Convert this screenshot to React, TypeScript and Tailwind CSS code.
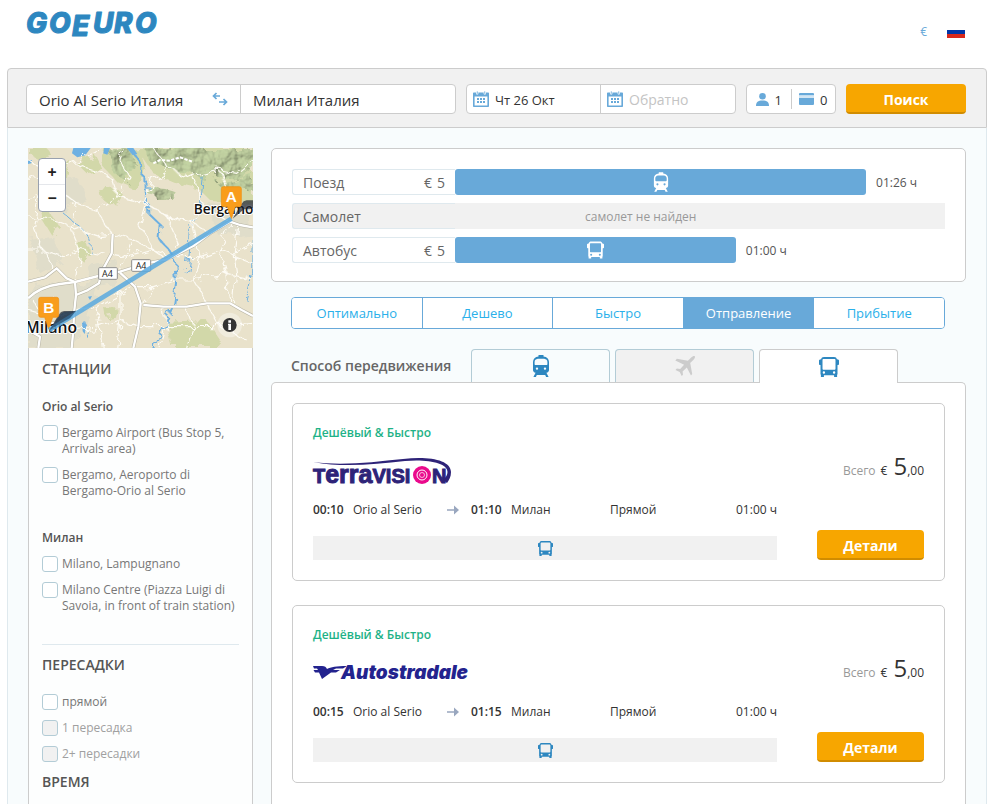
import { useState } from 'react'
import { clsx } from 'clsx'

interface IconProps {
  className?: string
}

interface CompareRow {
  label: string
  price?: number
  // bar length in percent of the track
  share?: number
  duration?: string
  icon?: 'train' | 'bus'
  empty?: string
}

interface Trip {
  id: string
  carrier: 'terravision' | 'autostradale'
  depart: string
  arrive: string
}

interface StationGroup {
  city: string
  stations: string[]
}

const compareRows: CompareRow[] = [
  { label: 'Поезд', price: 5, share: 83.9, duration: '01:26 ч', icon: 'train' },
  { label: 'Самолет', empty: 'самолет не найден' },
  { label: 'Автобус', price: 5, share: 57.3, duration: '01:00 ч', icon: 'bus' },
]

const sortOptions = ['Оптимально', 'Дешево', 'Быстро', 'Отправление', 'Прибытие']

const stationGroups: StationGroup[] = [
  {
    city: 'Orio al Serio',
    stations: ['Bergamo Airport (Bus Stop 5, Arrivals area)', 'Bergamo, Aeroporto di Bergamo-Orio al Serio'],
  },
  {
    city: 'Милан',
    stations: ['Milano, Lampugnano', 'Milano Centre (Piazza Luigi di Savoia, in front of train station)'],
  },
]

const trips: Trip[] = [
  { id: 't1', carrier: 'terravision', depart: '00:10', arrive: '01:10' },
  { id: 't2', carrier: 'autostradale', depart: '00:15', arrive: '01:15' },
]

function BusIcon({ className }: IconProps) {
  return (
    <svg className={className} viewBox="0 0 20 20" fill="currentColor" aria-hidden="true">
      <path
        fillRule="evenodd"
        d="M5 0h10c1.700 0 2.600.8 2.800 2.200l1.300.3c.6.2.9.5.9 1.100v3.600c0 .5-.4.8-.9.8h-.6v9.600h-.4V20h-3v-1.800H4.900V20h-3v-2.400h-.4V8H.9C.4 8 0 7.700 0 7.200V3.600c0-.6.3-.9.9-1.100l1.300-.3C2.400.8 3.300 0 5 0zM4.600 2C3.800 2 3.500 2.500 3.500 3.200v8.200c0 .8.3 1.300 1.100 1.300h10.800c.8 0 1.100-.5 1.100-1.300V3.200c0-.7-.3-1.200-1.100-1.200zM4.900 14.300a1.200 1.200 0 100 2.400 1.200 1.200 0 000-2.400zm10.200 0a1.200 1.200 0 100 2.400 1.200 1.200 0 000-2.400z"
      />
    </svg>
  )
}

function TrainIcon({ className }: IconProps) {
  return (
    <svg className={className} viewBox="0 0 18 22" fill="currentColor" aria-hidden="true">
      <path
        fillRule="evenodd"
        d="M6.500 0h5v1.400c3.400.4 5.500 2.400 5.500 5.600v8c0 1.500-1 2.500-2.600 2.800L16.600 22h-2.500l-.9-2H4.800l-.9 2H1.400l2.200-4.200C2 17.500 1 16.500 1 15V7c0-3.200 2.100-5.200 5.500-5.600zM5.800 3.700C3.700 4 2.600 5.200 2.600 7v2c0 .7.300 1.100 1 1.100h10.800c.7 0 1-.4 1-1.100V7c0-1.800-1.100-3-3.200-3.300zM5 12.400a1.200 1.200 0 100 2.400 1.200 1.200 0 000-2.400zm8 0a1.200 1.200 0 100 2.400 1.200 1.200 0 000-2.400z"
      />
    </svg>
  )
}

function PlaneIcon({ className }: IconProps) {
  return (
    <svg className={className} viewBox="0 0 20 20" fill="currentColor" aria-hidden="true">
      <path d="M19.800.2c.5 1-.3 2.500-1.500 3.700l-3.100 3.100 2 11-1.200 1.600-4.200-8.200-4.200 4 .4 3.300-1.300 1.300-2-4-4.200-2 1.300-1.400 3.400.5 3.900-4.300L.3 4.600 1.900 2.700l11 2 3.300-3.200C17.300.6 18.800-.3 19.800.2z" />
    </svg>
  )
}

function CalendarIcon({ className }: IconProps) {
  return (
    <svg className={className} viewBox="0 0 16 16" fill="#68a9d9" aria-hidden="true">
      <path fillRule="evenodd" d="M1 1.500h14c.6 0 1 .4 1 1V15c0 .6-.4 1-1 1H1c-.6 0-1-.4-1-1V2.500c0-.6.400-1 1-1zM1.600 5.500v8.900h12.800V5.500z" />
      <path d="M3.500 0h1.500v3.200H3.500zM11 0h1.500v3.200H11z" stroke="#fff" strokeWidth="0.700" />
      <path d="M4 7h2v2H4zM7 7h2v2H7zM10 7h2v2h-2zM4 10h2v2H4zM7 10h2v2H7zM10 10h2v2h-2z" />
    </svg>
  )
}

function Logo() {
  return (
    <svg className="h-[36px] w-[140px] overflow-visible" viewBox="0 0 140 36" role="img" aria-label="GoEuro">
      <g
        fill="#2d87c0"
        stroke="#2d87c0"
        strokeWidth="1"
        strokeLinejoin="round"
        fontFamily="Inter, 'Open Sans', sans-serif"
        fontWeight="800"
        fontStyle="italic"
        fontSize="28"
      >
        <text x="-1 22 45 66 87 108" y="23 23 26 23 23 23">GOEURO</text>
      </g>
    </svg>
  )
}

function TerravisionLogo() {
  return (
    <svg className="h-[28px] w-[140px] overflow-visible" viewBox="0 0 140 28" role="img" aria-label="Terravision">
      <g fill="#2e2378" stroke="#2e2378" strokeWidth="1" fontFamily="'Liberation Sans', Arial, sans-serif" fontWeight="700">
        <text x="0" y="26" fontSize="20">
          T<tspan fontSize="25">erra</tspan>VISI
        </text>
        <text x="119" y="26" fontSize="20">N</text>
      </g>
      <path d="M0 5C30 9 60 5 90 2c26-3 48 1 48 13 0 5-2 8-4 11l-4-3c3-3 4.500-5 4.500-8C134.500 6 115 2 92 4 62 7 32 11 0 5z" fill="#2e2378" />
      <circle cx="109" cy="18" r="9" fill="#ea0a8c" />
      <circle cx="109" cy="18" r="5" fill="none" stroke="#fff" strokeWidth="1" />
      <circle cx="109" cy="18" r="2.500" fill="none" stroke="#fff" strokeWidth="0.700" />
    </svg>
  )
}

function AutostradaleLogo() {
  return (
    <svg className="h-[28px] w-[160px] overflow-visible" viewBox="0 0 160 28" role="img" aria-label="Autostradale">
      <g fill="#23238e">
        <path d="M0 7h9c3 0 4 1 5 3 4-2 9-3 20-3l-4 2.500h-7L20 11h7l-4 2.500h-5L9 20l-3-6.500H2L.5 11H5L4 9.500H1z" />
        <text
          x="28"
          y="20"
          fontSize="19"
          fontWeight="900"
          fontStyle="italic"
          fontFamily="Inter, 'Liberation Sans', sans-serif"
        >
          Autostradale
        </text>
      </g>
    </svg>
  )
}

function MapPin({ letter, x, y }: { letter: string; x: number; y: number }) {
  return (
    <g transform={`translate(${x} ${y})`}>
      <path d="M4 0L30-44Q36-54 46-55H82L68-36Q62-28 52-28H38z" fill="#1d2430" opacity="0.700" />
      <path d="M-24-96H24Q30-96 30-90V-42Q30-36 24-36H12L0 0-12-36H-24Q-30-36-30-42V-90Q-30-96-24-96z" fill="#f99d1c" stroke="#ee8c0b" strokeWidth="2" />
      <text x="0" y="-50" textAnchor="middle" fontSize="46" fontWeight="700" fill="#fff" fontFamily="'Liberation Sans', Arial, sans-serif">
        {letter}
      </text>
    </g>
  )
}

const motorways = [
  'M24 475Q60 440 120 432L165 426 235 408 300 395 380 370 440 358 520 318 570 280 630 245 660 255 699 262',
  'M278 282L275 340 245 395 237 430 200 452 168 465 162 520 160 570 155 624',
  'M24 425L75 412 110 385 140 415 165 426 168 465',
  'M300 398L345 440 362 490 355 560 340 624',
  'M370 495L430 500 500 500 560 490 630 490 665 510 699 528',
  'M24 570L60 590 55 624M75 545L160 560',
]

const roads =
  'M24 60L90 90 120 150 170 190 230 210 278 285M90 90L60 170 40 260 70 330 100 390M24 120L90 90 160 70 230 40 240 24M170 190L150 260 180 330 165 426M230 210L290 170 330 110 300 60 310 24M24 230L100 240 150 260 240 290 278 285M290 170L380 190 440 230 520 250 570 280M278 285L340 300 400 330 460 350M380 190L360 260 400 330 440 358M440 230L480 320 460 350M340 300L320 350 300 395M24 330L70 330 130 350 180 330 260 345M400 330L330 350 275 340M400 24L450 90 520 110 550 200 630 245M520 110L600 90 650 100 699 60M550 200L520 250 540 350 520 420 560 490M630 245L600 330 620 400 630 490M540 350L600 330 650 350 699 370M460 350L540 350M460 420L520 420 620 400 699 420M362 490L400 440 460 420M345 440L400 440M500 500L520 560 500 624M560 490L600 560 680 600M430 500L440 560 420 624M355 560L440 560 520 560 600 560 699 550M160 520L230 500 300 460 345 440M160 570L240 560 300 540 355 560M230 500L240 560 250 624M300 460L300 540 290 624M100 470L110 520 160 520M40 480L60 520 110 520M24 510L60 520M650 255L640 330 650 400 640 490M699 310L640 330M290 170L270 110 220 90 160 70M60 170L130 160 170 190M24 180L60 170M450 90L400 120 380 190M600 90L620 150 600 200'

const hills = [
  'M270 34L330 34 355 70 345 100 320 125 285 105 265 70z',
  'M370 24H699V80L650 115 600 105 565 135 530 105 480 95 430 75 395 70z',
  'M385 145L440 150 470 160 460 178 420 175 388 168z',
  'M590 130L640 120 699 100V150L660 145 625 160z',
]

const meadows = [
  'M240 150L290 145 315 170 300 195 265 190 245 175z',
  'M180 310L200 300 205 340 190 365 175 350z',
  'M255 505H290L285 530 260 535z',
  'M60 230L90 220 120 260 90 280z',
  'M110 90L150 60 140 120 120 130z',
  'M24 24H80L100 50 60 60 24 40z',
  'M170 70L230 50 250 90 200 100z',
  'M440 545L560 540 600 600 580 624H460z',
  'M255 30L360 24 380 90 340 145 290 125 250 80z',
  'M350 24H699V180L640 185 570 180 530 140 460 125 400 100z',
]

function RouteMap() {
  return (
    <div className="relative h-[200px] overflow-hidden bg-[#e8e1ca]">
      <svg className="h-full w-full" viewBox="24 24 675 600" preserveAspectRatio="xMidYMid slice" role="img" aria-label="Bergamo – Milano">
        <defs>
          <filter id="rough" x="-10%" y="-10%" width="120%" height="120%">
            <feTurbulence type="fractalNoise" baseFrequency="0.030" numOctaves="3" seed="4" result="noise" />
            <feDisplacementMap in="SourceGraphic" in2="noise" scale="38" />
          </filter>
          <filter id="relief" x="0" y="0" width="100%" height="100%">
            <feTurbulence type="fractalNoise" baseFrequency="0.022" numOctaves="4" seed="9" result="n" />
            <feDiffuseLighting in="n" surfaceScale="14" diffuseConstant="1.150" lightingColor="#b7c79a" result="light">
              <feDistantLight azimuth="225" elevation="58" />
            </feDiffuseLighting>
            <feDisplacementMap in="SourceGraphic" in2="n" scale="60" result="shape" />
            <feComposite in="light" in2="shape" operator="in" />
          </filter>
        </defs>
        <rect x="24" y="24" width="675" height="600" fill="#e9e2cb" />
        <g fill="#e0ddca" filter="url(#rough)">
          <path d="M24 450L140 420 240 440 200 560 150 624H24zM60 130L170 110 200 180 120 210zM200 380L290 360 280 430 220 440zM560 190L690 180 699 280 600 290zM30 300L100 290 130 360 60 400z" />
        </g>
        <g fill="#d2d8a9" filter="url(#rough)">
          {meadows.map((d) => (
            <path key={d} d={d} />
          ))}
        </g>
        <g fill="#a9bd8c" filter="url(#relief)" opacity="0.900">
          {hills.map((d) => (
            <path key={d} d={d} />
          ))}
        </g>
        <g fill="none" stroke="#6db0e2" strokeLinejoin="round">
          <g filter="url(#rough)">
            <path strokeWidth="6" d="M335 34L360 70 362 100 382 120 385 220 425 258 422 300 462 352 468 430 458 500 428 570 400 634" />
            <path strokeWidth="3" d="M550 110L540 210 510 280 508 340 498 400M700 280L698 400 678 480M120 210L190 270 215 310 208 340M195 545L200 590" />
          </g>
          <path fill="#6db0e2" stroke="none" d="M160 24H212L196 46 172 52 156 40zM252 24H270L262 44 250 40zM320 24H340L352 42 338 46zM24 62L36 60 34 70 24 72zM186 548L200 552 194 582 188 574zM204 470L216 468 210 480z" />
        </g>
        <path d={roads} fill="none" stroke="#fdfbf4" strokeWidth="3.500" strokeLinejoin="round" filter="url(#rough)" />
        <path d="M400 70L420 60 450 62 480 52 520 66" fill="none" stroke="#fff" strokeWidth="6" strokeDasharray="10 4" />
        <g fill="none" strokeLinejoin="round">
          {motorways.map((d) => (
            <path key={d} d={d} stroke="#b5b2a2" strokeWidth="10" />
          ))}
          {motorways.map((d) => (
            <path key={d} d={d} stroke="#fff" strokeWidth="7" />
          ))}
        </g>
        <g fill="#fff" stroke="#8f8f8f" strokeWidth="3">
          <rect x="236" y="383" width="56" height="35" rx="3" />
          <rect x="335" y="359" width="57" height="35" rx="3" />
        </g>
        <g fontFamily="'Open Sans', sans-serif" fontSize="27" fill="#222" fontWeight="500">
          <text x="246" y="410">A4</text>
          <text x="347" y="386">A4</text>
        </g>
        <g fontFamily="'Open Sans', sans-serif" fill="#111" fontWeight="600" stroke="#fff" strokeWidth="6" paintOrder="stroke" strokeLinejoin="round">
          <text x="521" y="221" fontSize="41">Bergamo</text>
          <text x="16" y="578" fontSize="47">Milano</text>
        </g>
        <MapPin letter="A" x={634} y={236} />
        <MapPin letter="B" x={86} y={568} />
        <path d="M634 236L88 570" stroke="#5aaae0" strokeWidth="14" opacity="0.850" />
        <path d="M88 570L122 522Q130 514 142 515L168 512 150 534z" fill="#1d3b58" opacity="0.600" />
        <circle cx="629" cy="555" r="37" fill="#fff" opacity="0.350" />
        <circle cx="629" cy="555" r="21" fill="#333" />
        <path d="M625 541h8v7h-8zM624 551h9v19h-8v-15h-1z" fill="#fff" />
      </svg>
      <div className="absolute top-2.5 left-2.5 flex w-7 flex-col divide-y divide-gray-200 rounded border border-gray-400 bg-white text-base font-bold text-[#222]">
        <button type="button" aria-label="Zoom in" className="h-[26px] leading-none">
          +
        </button>
        <button type="button" aria-label="Zoom out" className="h-[26px] leading-none">
          −
        </button>
      </div>
    </div>
  )
}

function CheckRow({ label, disabled }: { label: string; disabled?: boolean }) {
  return (
    <label className={clsx('flex items-start gap-1 text-xs leading-4', disabled ? 'text-[#a0a0a0]' : 'text-[#777]')}>
      <input
        type="checkbox"
        disabled={disabled}
        className="size-4 shrink-0 appearance-none rounded-[3px] border border-[#b3ccd6] bg-white checked:bg-[#68a9d9] disabled:bg-[#f1f1f1]"
      />
      <span>{label}</span>
    </label>
  )
}

function Sidebar() {
  return (
    <aside className="flex w-[225px] shrink-0 flex-col">
      <RouteMap />
      <div className="flex-1 border-x border-[#ccc] bg-[#fdfefe] px-[13px] pt-3">
        <h2 className="text-sm leading-[18px] font-semibold text-[#555]">СТАНЦИИ</h2>
        <div className="mt-[21px] flex flex-col gap-[31px] border-b border-[#dfe9ee] pb-[30px]">
          {stationGroups.map((group) => (
            <section key={group.city} className="flex flex-col gap-2.5">
              <h3 className="text-xs leading-4 font-semibold text-[#555]">{group.city}</h3>
              {group.stations.map((name) => (
                <CheckRow key={name} label={name} />
              ))}
            </section>
          ))}
        </div>
        <h2 className="mt-[11px] text-sm leading-[18px] font-semibold text-[#555]">ПЕРЕСАДКИ</h2>
        <div className="mt-5 flex flex-col gap-2.5">
          <CheckRow label="прямой" />
          <CheckRow label="1 пересадка" disabled />
          <CheckRow label="2+ пересадки" disabled />
        </div>
        <h2 className="mt-[11px] text-sm leading-[18px] font-semibold text-[#555]">ВРЕМЯ</h2>
      </div>
    </aside>
  )
}

function SearchBar() {
  return (
    <form className="flex items-center gap-2.5 rounded-t border border-[#ccc] bg-[#f1f1f1] pt-[15px] pr-5 pb-[13px] pl-[18px]" onSubmit={(e) => e.preventDefault()}>
      <div className="grid h-[30px] flex-1 grid-cols-2 divide-x divide-[#ccc] rounded border border-[#ccc] bg-white text-[15px] text-[#333]">
        <div className="flex items-center">
          <input aria-label="Откуда" defaultValue="Orio Al Serio Италия" className="w-0 flex-1 bg-transparent pt-0.5 pl-3 outline-none" />
          <button type="button" aria-label="Поменять местами" className="pr-3">
            <svg className="h-3.5 w-4" viewBox="0 0 16 14" fill="none" stroke="#68a9d9" strokeWidth="1.700" aria-hidden="true">
              <path d="M8 4H1.500M4.500 1L1.500 4l3 3M7 10h7.500M11.500 7l3 3-3 3" />
            </svg>
          </button>
        </div>
        <input aria-label="Куда" defaultValue="Милан Италия" className="min-w-0 bg-transparent pt-0.5 pl-3 outline-none" />
      </div>
      <div className="grid h-[30px] w-[270px] grid-cols-2 divide-x divide-[#ccc] rounded border border-[#ccc] bg-white">
        <label className="flex items-center gap-1.5 pl-1.5">
          <CalendarIcon className="size-4 shrink-0" />
          <input aria-label="Туда" defaultValue="Чт 26 Окт" className="w-0 flex-1 bg-transparent pt-1 text-[13px] text-[#333] outline-none" />
        </label>
        <label className="flex items-center gap-1.5 pl-1.5">
          <CalendarIcon className="size-4 shrink-0" />
          <input aria-label="Обратно" placeholder="Обратно" className="w-0 flex-1 bg-transparent pt-0.5 text-sm outline-none placeholder:text-[#c4c4c4]" />
        </label>
      </div>
      <div className="flex h-[30px] w-[90px] items-center divide-x divide-[#ccc] rounded border border-[#ccc] bg-white text-[13px] text-[#333]">
        <button type="button" aria-label="Пассажиры: 1" className="flex h-5 flex-1 items-center justify-center gap-1.5">
          <svg className="h-[13px] w-[13px]" viewBox="0 0 13 13" fill="#68a9d9" aria-hidden="true">
            <circle cx="6.500" cy="3.300" r="3.300" />
            <path d="M0 13c0-4 2-5.500 6.500-5.500S13 9 13 13z" />
          </svg>
          <span className="pt-1">1</span>
        </button>
        <button type="button" aria-label="Скидочные карты: 0" className="flex h-5 flex-1 items-center justify-center gap-1.5">
          <svg className="h-3 w-[15px]" viewBox="0 0 15 12" fill="#68a9d9" aria-hidden="true">
            <path d="M1 0h13q1 0 1 1v1.500H0V1q0-1 1-1zM0 5h15v6q0 1-1 1H1q-1 0-1-1z" />
            <path d="M0 2.500h15V5H0z" fill="#d3e6f4" />
          </svg>
          <span className="pt-1">0</span>
        </button>
      </div>
      <button type="submit" className="h-[30px] w-[120px] rounded border-b-2 border-[#d18c00] bg-[#f7a600] pt-1 text-sm font-bold text-white">
        Поиск
      </button>
    </form>
  )
}

function CompareCard() {
  return (
    <section className="flex flex-col gap-2 rounded-[5px] border border-[#ccc] bg-white px-5 pt-5 pb-[18px]">
      {compareRows.map((row) => (
        <div key={row.label} className="flex h-[26px] items-center">
          <div
            className={clsx(
              'flex h-full w-[163px] items-center justify-between rounded-l-[3px] border border-r-0 border-[#dfe9ee] pt-0.5 pr-2.5 pl-2.5 text-sm text-[#666]',
              row.empty && 'bg-[#f1f1f1]'
            )}
          >
            <span>{row.label}</span>
            {row.price && (
              <span className="flex gap-[5px]">
                <span>€</span>
                <span>{row.price}</span>
              </span>
            )}
          </div>
          {row.empty ? (
            <div className="flex h-full flex-1 items-center bg-[#f1f1f1] pt-0.5 pl-[130px] text-xs text-[#999]">{row.empty}</div>
          ) : (
            <div className="flex h-full flex-1 items-center gap-2.5">
              <div
                className="flex h-full items-center justify-center rounded-[3px] bg-[#68a9d9] text-white"
                style={{ width: `${row.share}%` }}
              >
                {row.icon === 'train' ? <TrainIcon className="h-5 w-4" /> : <BusIcon className="h-[18px] w-[17px]" />}
              </div>
              <span className="pt-0.5 text-xs whitespace-nowrap text-[#555]">{row.duration}</span>
            </div>
          )}
        </div>
      ))}
    </section>
  )
}

function SortTabs() {
  const [active, setActive] = useState('Отправление')

  return (
    <div className="mt-[15px] mr-[21px] ml-5 flex h-8 divide-x divide-[#68a9d9] overflow-hidden rounded border border-[#68a9d9]">
      {sortOptions.map((option) => (
        <button
          key={option}
          type="button"
          onClick={() => setActive(option)}
          className={clsx('flex-1 basis-0 pt-0.5 text-[13px]', active === option ? 'bg-[#68a9d9] text-white' : 'bg-white text-[#2ab0ea]')}
        >
          {option}
        </button>
      ))}
    </div>
  )
}

function TripCard({ trip }: { trip: Trip }) {
  return (
    <article className="flex h-[178px] gap-10 rounded-[5px] border border-[#ccc] bg-white p-5">
      <div className="flex flex-1 flex-col">
        <p className="text-xs leading-[18px] font-semibold text-[#1eb287]">Дешёвый &amp; Быстро</p>
        <div className="mt-[15px]">{trip.carrier === 'terravision' ? <TerravisionLogo /> : <AutostradaleLogo />}</div>
        <div className="mt-4 grid grid-cols-[40px_94px_24px_40px_99px_1fr] items-center text-xs leading-[18px] text-[#333]">
          <span className="font-semibold">{trip.depart}</span>
          <span>Orio al Serio</span>
          <svg className="h-2.5 w-3" viewBox="0 0 12 10" fill="#99a7bf" aria-hidden="true">
            <path d="M0 4.300h7V.5L12 5 7 9.500V5.700H0z" />
          </svg>
          <span className="font-semibold">{trip.arrive}</span>
          <span>Милан</span>
          <span className="flex justify-between">
            <span>Прямой</span>
            <span>01:00 ч</span>
          </span>
        </div>
        <div className="mt-[17px] flex h-6 items-center justify-center bg-[#f1f1f1] text-[#2d87c0]">
          <BusIcon className="h-[15px] w-[15px]" />
        </div>
      </div>
      <div className="flex w-[107px] flex-col justify-between pt-[26px]">
        <p className="flex items-baseline justify-end text-xs whitespace-nowrap text-[#333]">
          <span className="text-[#999]">Всего</span>
          <span className="pr-1.5 pl-[5px]">€</span>
          <span className="text-2xl">5</span>
          <span>,00</span>
        </p>
        <button type="button" className="h-[30px] rounded border-b-2 border-[#d18c00] bg-[#f7a600] pt-1 text-sm font-bold text-white">
          Детали
        </button>
      </div>
    </article>
  )
}

export default function App() {
  return (
    <div className="flex min-h-screen flex-col bg-white px-[7px] font-['Open_Sans',sans-serif]">
      <header className="flex h-[68px] items-start justify-between pt-2.5 pr-[22px] pl-5">
        <Logo />
        <div className="flex items-center gap-5 pt-3">
          <button type="button" aria-label="Валюта" className="text-xs leading-5 text-[#68a9d9]">
            €
          </button>
          <button type="button" aria-label="Русский" className="flex h-3 w-[18px] flex-col">
            <span className="h-1 w-full bg-white" />
            <span className="h-1 w-full bg-[#0036a7]" />
            <span className="h-1 w-full bg-[#d8281c]" />
          </button>
        </div>
      </header>

      <SearchBar />

      <div className="flex flex-1 gap-[18px] border-x border-[#dfe9ee] bg-[#f8fcfd] px-5 pt-5">
        <Sidebar />
        <main className="flex min-w-0 flex-1 flex-col">
          <CompareCard />
          <SortTabs />

          {/* Transport mode tabs, the active one runs into the panel below */}
          <div className="mt-5 ml-5 flex h-[33px] gap-[5px]">
            <h2 className="w-[175px] pt-[7px] text-sm font-semibold whitespace-nowrap text-[#666]">Способ передвижения</h2>
            <button type="button" aria-label="Поезд" className="flex w-[139px] items-center justify-center rounded-t border border-b-0 border-[#b3ccd6] text-[#2d87c0]">
              <TrainIcon className="h-[22px] w-[18px]" />
            </button>
            <button
              type="button"
              disabled
              aria-label="Самолет"
              className="flex w-[139px] items-center justify-center rounded-t border border-b-0 border-[#b3ccd6] bg-[#f1f1f1] text-[#ccc]"
            >
              <PlaneIcon className="size-5" />
            </button>
            <button type="button" aria-label="Автобус" className="z-10 -mb-px flex w-[139px] items-center justify-center rounded-t border border-b-0 border-[#ccc] bg-white text-[#2d87c0]">
              <BusIcon className="size-5" />
            </button>
          </div>

          <div className="flex flex-1 flex-col gap-6 rounded-t-[5px] border border-b-0 border-[#ccc] bg-white px-5 pt-5 pb-[21px]">
            {trips.map((trip) => (
              <TripCard key={trip.id} trip={trip} />
            ))}
          </div>
        </main>
      </div>
    </div>
  )
}
